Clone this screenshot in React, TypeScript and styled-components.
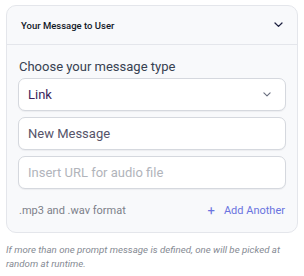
import React from "react";
import styled, { createGlobalStyle } from "styled-components";

const Global = createGlobalStyle`
  body {
    margin: 0;
    background: #fff;
    font-family: Roboto, "Liberation Sans", sans-serif;
  }
`;

const Page = styled.div`
  padding: 5px 6px;
  width: 292px;
`;

const Card = styled.div`
  border: 1px solid #e4e6eb;
  border-radius: 10px;
  background: #f8f9fb;
  overflow: hidden;
`;

const Header = styled.div`
  display: flex;
  align-items: center;
  justify-content: space-between;
  height: 38px;
  padding: 0 14px;
  border-bottom: 1px solid #e4e6eb;
  font-size: 9.5px;
  font-weight: 500;
  color: #111827;
`;

const Body = styled.div`
  padding: 14px 11px 15px;
  display: flex;
  flex-direction: column;
`;

const Label = styled.div`
  font-size: 13px;
  line-height: 16px;
  color: #374151;
  margin: 0 0 3px 1px;
`;

const Field = styled.div<{ $tone?: "value" | "text" | "placeholder" }>`
  display: flex;
  align-items: center;
  justify-content: space-between;
  height: 31px;
  padding: 0 14px 0 9px;
  background: #fff;
  border: 1px solid #d5d8de;
  border-radius: 7px;
  box-shadow: 0 1px 1px rgba(16, 24, 40, 0.05);
  font-size: 13px;
  color: ${(p) =>
    p.$tone === "value" ? "#3a1f5c" : p.$tone === "placeholder" ? "#b1b4bb" : "#56546a"};
  & + & {
    margin-top: 6px;
  }
`;

const Footer = styled.div`
  display: flex;
  align-items: center;
  justify-content: space-between;
  margin-top: 15px;
  padding: 0 1px;
  font-size: 11px;
  color: #7c8089;
`;

const AddButton = styled.span`
  display: flex;
  align-items: center;
  gap: 9px;
  color: #6a74e0;
  font-size: 11px;
`;

const Plus = styled.span`
  font-size: 13px;
  line-height: 1;
`;

const Note = styled.p`
  margin: 10px 0 0;
  font-size: 9.7px;
  line-height: 14px;
  font-style: italic;
  color: #858a93;
`;

function Chevron({ color = "#1e2140", size = 9 }: { color?: string; size?: number }) {
  return (
    <svg width={size} height={size * 0.6} viewBox="0 0 9 5.4" fill="none">
      <path d="M1 1l3.5 3.4L8 1" stroke={color} strokeWidth="1.3" strokeLinecap="round" strokeLinejoin="round" />
    </svg>
  );
}

export default function App() {
  return (
    <Page>
      <Global />
      <Card>
        <Header>
          <span>Your Message to User</span>
          <Chevron />
        </Header>
        <Body>
          <Label>Choose your message type</Label>
          <Field $tone="value">
            <span>Link</span>
            <Chevron color="#6b7080" size={8} />
          </Field>
          <Field $tone="text">New Message</Field>
          <Field $tone="placeholder">Insert URL for audio file</Field>
          <Footer>
            <span>.mp3 and .wav format</span>
            <AddButton>
              <Plus>+</Plus>
              <span>Add Another</span>
            </AddButton>
          </Footer>
        </Body>
      </Card>
      <Note>
        If more than one prompt message is defined, one will be picked at
        random at runtime.
      </Note>
    </Page>
  );
}
